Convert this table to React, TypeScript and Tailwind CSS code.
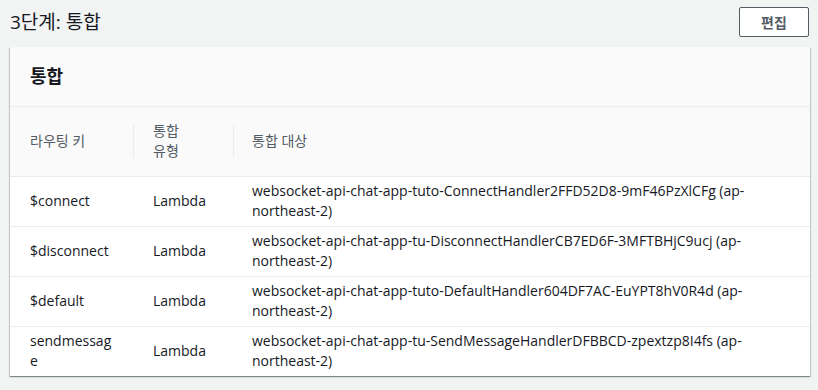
import React from 'react';

interface Route {
  key: string;
  type: string;
  target: string;
}

const routes: Route[] = [
  { key: '$connect', type: 'Lambda', target: 'websocket-api-chat-app-tuto-ConnectHandler2FFD52D8-9mF46PzXlCFg (ap-northeast-2)' },
  { key: '$disconnect', type: 'Lambda', target: 'websocket-api-chat-app-tu-DisconnectHandlerCB7ED6F-3MFTBHjC9ucj (ap-northeast-2)' },
  { key: '$default', type: 'Lambda', target: 'websocket-api-chat-app-tuto-DefaultHandler604DF7AC-EuYPT8hV0R4d (ap-northeast-2)' },
  { key: 'sendmessage', type: 'Lambda', target: 'websocket-api-chat-app-tu-SendMessageHandlerDFBBCD-zpextzp8I4fs (ap-northeast-2)' },
];

const font = { fontFamily: '"Open Sans", "Noto Sans CJK KR", sans-serif' };

export default function App() {
  return (
    <div className="min-h-screen w-full bg-[#f2f3f3] text-[#16191f] pl-[10px] pr-[8px] pt-[7px]" style={font}>
      {/* Step heading */}
      <div className="flex items-center justify-between">
        <h2 className="text-[19px] leading-[30px] font-normal">3단계: 통합</h2>
        <button className="h-[30px] w-[70px] mr-[1px] rounded-[2px] border border-[#545b64] bg-white text-[14px] font-bold text-[#545b64]">
          편집
        </button>
      </div>

      {/* Card */}
      <div className="mt-[10px] w-[800px] bg-white shadow-[0_1px_1px_0_rgba(0,28,36,0.3),1px_1px_1px_0_rgba(0,28,36,0.15),-1px_1px_1px_0_rgba(0,28,36,0.15)]">
        <div className="h-[60px] flex items-center px-5 bg-[#fafafa] border-b border-[#eaeded]">
          <h3 className="text-[18px] font-bold">통합</h3>
        </div>

        <table className="w-full table-fixed border-collapse text-[14px] leading-[20px]">
          <colgroup>
            <col className="w-[123px]" />
            <col className="w-[100px]" />
            <col />
          </colgroup>
          <thead>
            <tr className="bg-[#fafafa] h-[69px] text-[#545b64] text-left">
              <th className="font-normal px-5 py-0">
                <div>라우팅 키</div>
              </th>
              <th className="font-normal p-0">
                <div className="flex items-center">
                  <span className="w-px h-[34px] bg-[#eaeded]" />
                  <div className="pl-[19px] max-w-[60px]">통합 유형</div>
                </div>
              </th>
              <th className="font-normal p-0">
                <div className="flex items-center">
                  <span className="w-px h-[34px] bg-[#eaeded]" />
                  <div className="pl-[18px]">통합 대상</div>
                </div>
              </th>
            </tr>
          </thead>
          <tbody>
            {routes.map((r) => (
              <tr key={r.key} className="h-[50px] border-t border-[#eaeded]">
                <td className="px-5 py-[4px] break-all">{r.key}</td>
                <td className="px-5 py-[4px]">{r.type}</td>
                <td className="pl-[19px] pr-[40px] py-[4px]">{r.target}</td>
              </tr>
            ))}
          </tbody>
        </table>
      </div>
    </div>
  );
}
